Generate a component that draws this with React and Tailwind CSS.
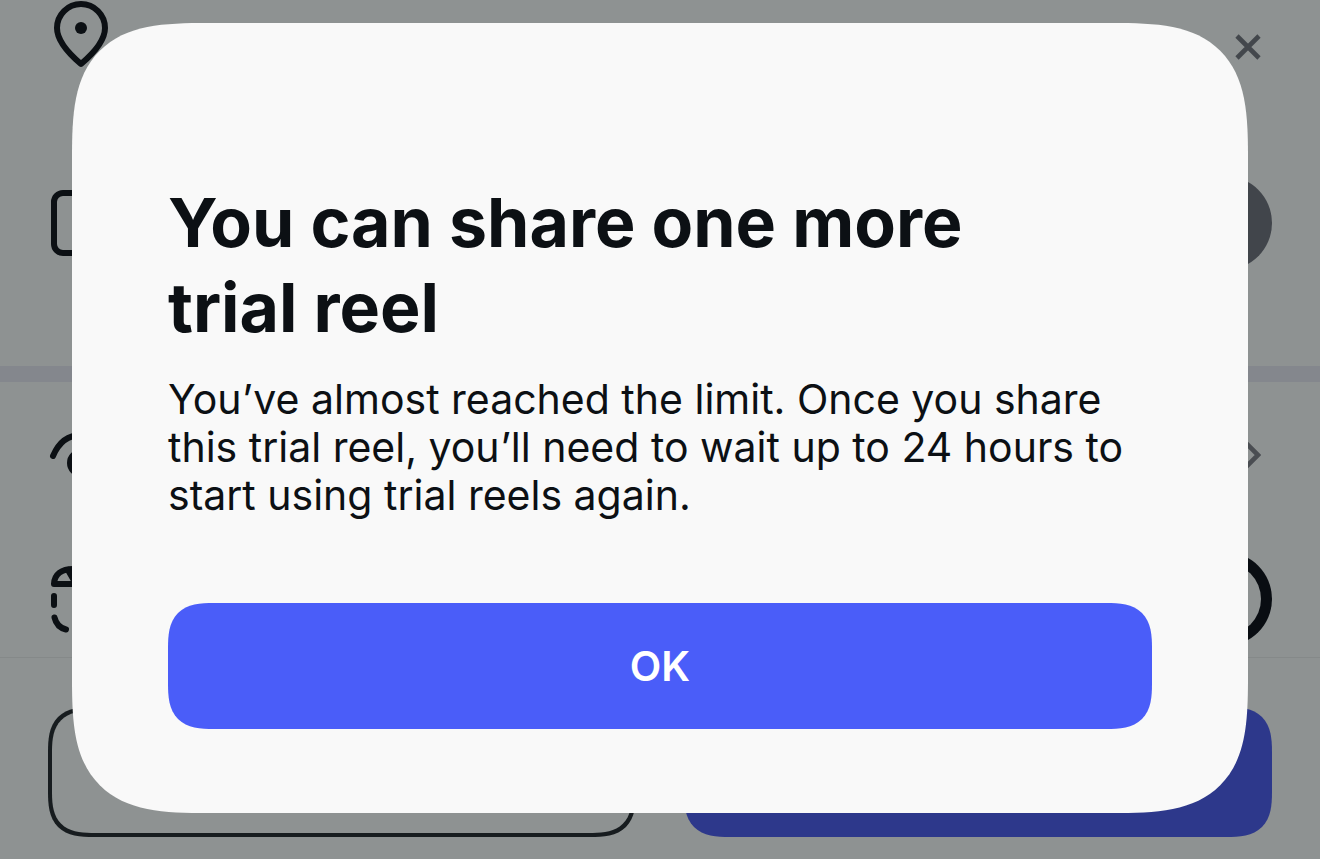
import React, { useState } from 'react';

const PinIcon = () => (
  <svg className="w-[66px] h-[68px]" viewBox="0 0 66 68" fill="none" stroke="currentColor" strokeWidth="6" strokeLinejoin="round">
    <path d="M33 64C23 55.500 9 42 9 28a24 24 0 0 1 48 0c0 14-14 27.500-24 36Z" />
    <circle cx="33" cy="28" r="6" fill="currentColor" stroke="none" />
  </svg>
);

const SquareIcon = () => (
  <svg className="w-[72px] h-[72px]" viewBox="0 0 72 72" fill="none" stroke="currentColor" strokeWidth="6">
    <rect x="6" y="6" width="60" height="60" rx="9" />
  </svg>
);

const EyeIcon = () => (
  <svg className="w-[66px] h-[66px]" viewBox="0 0 66 66" fill="none" stroke="currentColor" strokeWidth="6" strokeLinecap="round">
    <path d="M5 34C10.500 21 20 13 33 13s22.500 8 28 21" />
    <circle cx="33" cy="41" r="11" />
  </svg>
);

const TrialReelIcon = () => (
  <svg className="w-[72px] h-[72px]" viewBox="0 0 72 72" fill="none" stroke="currentColor" strokeWidth="6" strokeLinecap="round" strokeLinejoin="round">
    <path d="M6 21C6.500 11 14 6 25 6h22c11 0 18 5 19 15H6Z" />
    <path d="M20 7l8 14M42 6l8 15" />
    <path d="M6 33v9M6.500 54.500C8 61 12 65 18 66.500M30 67h12M54 66.500c6-1.500 10-5.500 11.500-12M66 33v9" />
  </svg>
);

const CloseIcon = () => (
  <svg className="w-[26px] h-[26px]" viewBox="0 0 26 26" fill="none" stroke="currentColor" strokeWidth="4.6">
    <path d="M2 2l22 22M24 2L2 24" />
  </svg>
);

const ChevronIcon = () => (
  <svg className="w-4 h-7" viewBox="0 0 16 28" fill="none" stroke="currentColor" strokeWidth="4.6">
    <path d="M0 1l13 13L0 27" />
  </svg>
);

const Switch = ({ label, defaultChecked = false }) => {
  const [checked, setChecked] = useState(defaultChecked);

  return (
    <label className="relative block cursor-pointer">
      <input
        type="checkbox"
        role="switch"
        aria-label={label}
        checked={checked}
        onChange={(e) => setChecked(e.target.checked)}
        className="peer block w-[154px] h-[94px] appearance-none rounded-full bg-[#41454b] checked:bg-[#090d12]"
      />
      <span className="absolute top-[11px] left-[11px] w-[72px] h-[72px] rounded-full bg-[#8e9292] pointer-events-none peer-checked:left-[71px]" />
    </label>
  );
};

const ShareSettings = () => (
  <main className="text-[#0c1014]">
    <div className="flex h-[95px] items-start justify-between px-12">
      <PinIcon />
      <button type="button" aria-label="Clear location" className="mt-[34px] mr-[11px] text-[#43474c]">
        <CloseIcon />
      </button>
    </div>
    <div className="flex h-64 items-center justify-between px-12">
      <SquareIcon />
      <Switch label="Label" />
    </div>
    <div className="mt-[15px] h-4 bg-[#84878d]" />
    <div className="flex h-[146px] items-center justify-between px-12">
      <EyeIcon />
      <button type="button" aria-label="Audience" className="mr-[11px] text-[#4a4d52]">
        <ChevronIcon />
      </button>
    </div>
    <div className="flex h-[129px] items-center justify-between px-12 pt-3">
      <TrialReelIcon />
      <Switch label="Trial" defaultChecked />
    </div>
    <footer className="grid grid-cols-2 gap-12 border-t border-[#858989] px-12 pt-[49px] pb-[22px]">
      <button
        type="button"
        aria-label="Save draft"
        className="h-[130px] rounded-[46px] border-4 border-[#171c1f] [corner-shape:superellipse(1.5)]"
      />
      <button
        type="button"
        aria-label="Share"
        className="h-[130px] rounded-[46px] bg-[#2d388b] [corner-shape:superellipse(1.5)]"
      />
    </footer>
  </main>
);

const LimitDialog = ({ onClose }) => (
  <div className="absolute inset-0 px-[72px] pt-[23px]">
    <div
      role="dialog"
      aria-modal="true"
      aria-labelledby="limit-title"
      className="rounded-[136px] bg-[#f9f9f9] px-24 pt-[157px] pb-[84px] text-[#0c1014] [corner-shape:superellipse(1.6)]"
    >
      <h1 id="limit-title" className="max-w-[900px] text-[68px] leading-[85px] font-bold">
        You can share one more trial reel
      </h1>
      <p className="mt-[25px] text-[41px] leading-[48px]">
        You’ve almost reached the limit. Once you share this trial reel, you’ll need to wait up to 24 hours to start using trial reels again.
      </p>
      <button
        type="button"
        onClick={onClose}
        className="mt-[84px] block h-[126px] w-full rounded-[46px] bg-[#4a5df9] pt-0.5 text-[41px] font-semibold text-white [corner-shape:superellipse(1.5)]"
      >
        OK
      </button>
    </div>
  </div>
);

const App = () => {
  const [open, setOpen] = useState(true);

  return (
    <div className="relative min-h-screen bg-[#8e9292] font-['Inter',sans-serif]">
      <ShareSettings />
      {open && <LimitDialog onClose={() => setOpen(false)} />}
    </div>
  );
};

export default App;
